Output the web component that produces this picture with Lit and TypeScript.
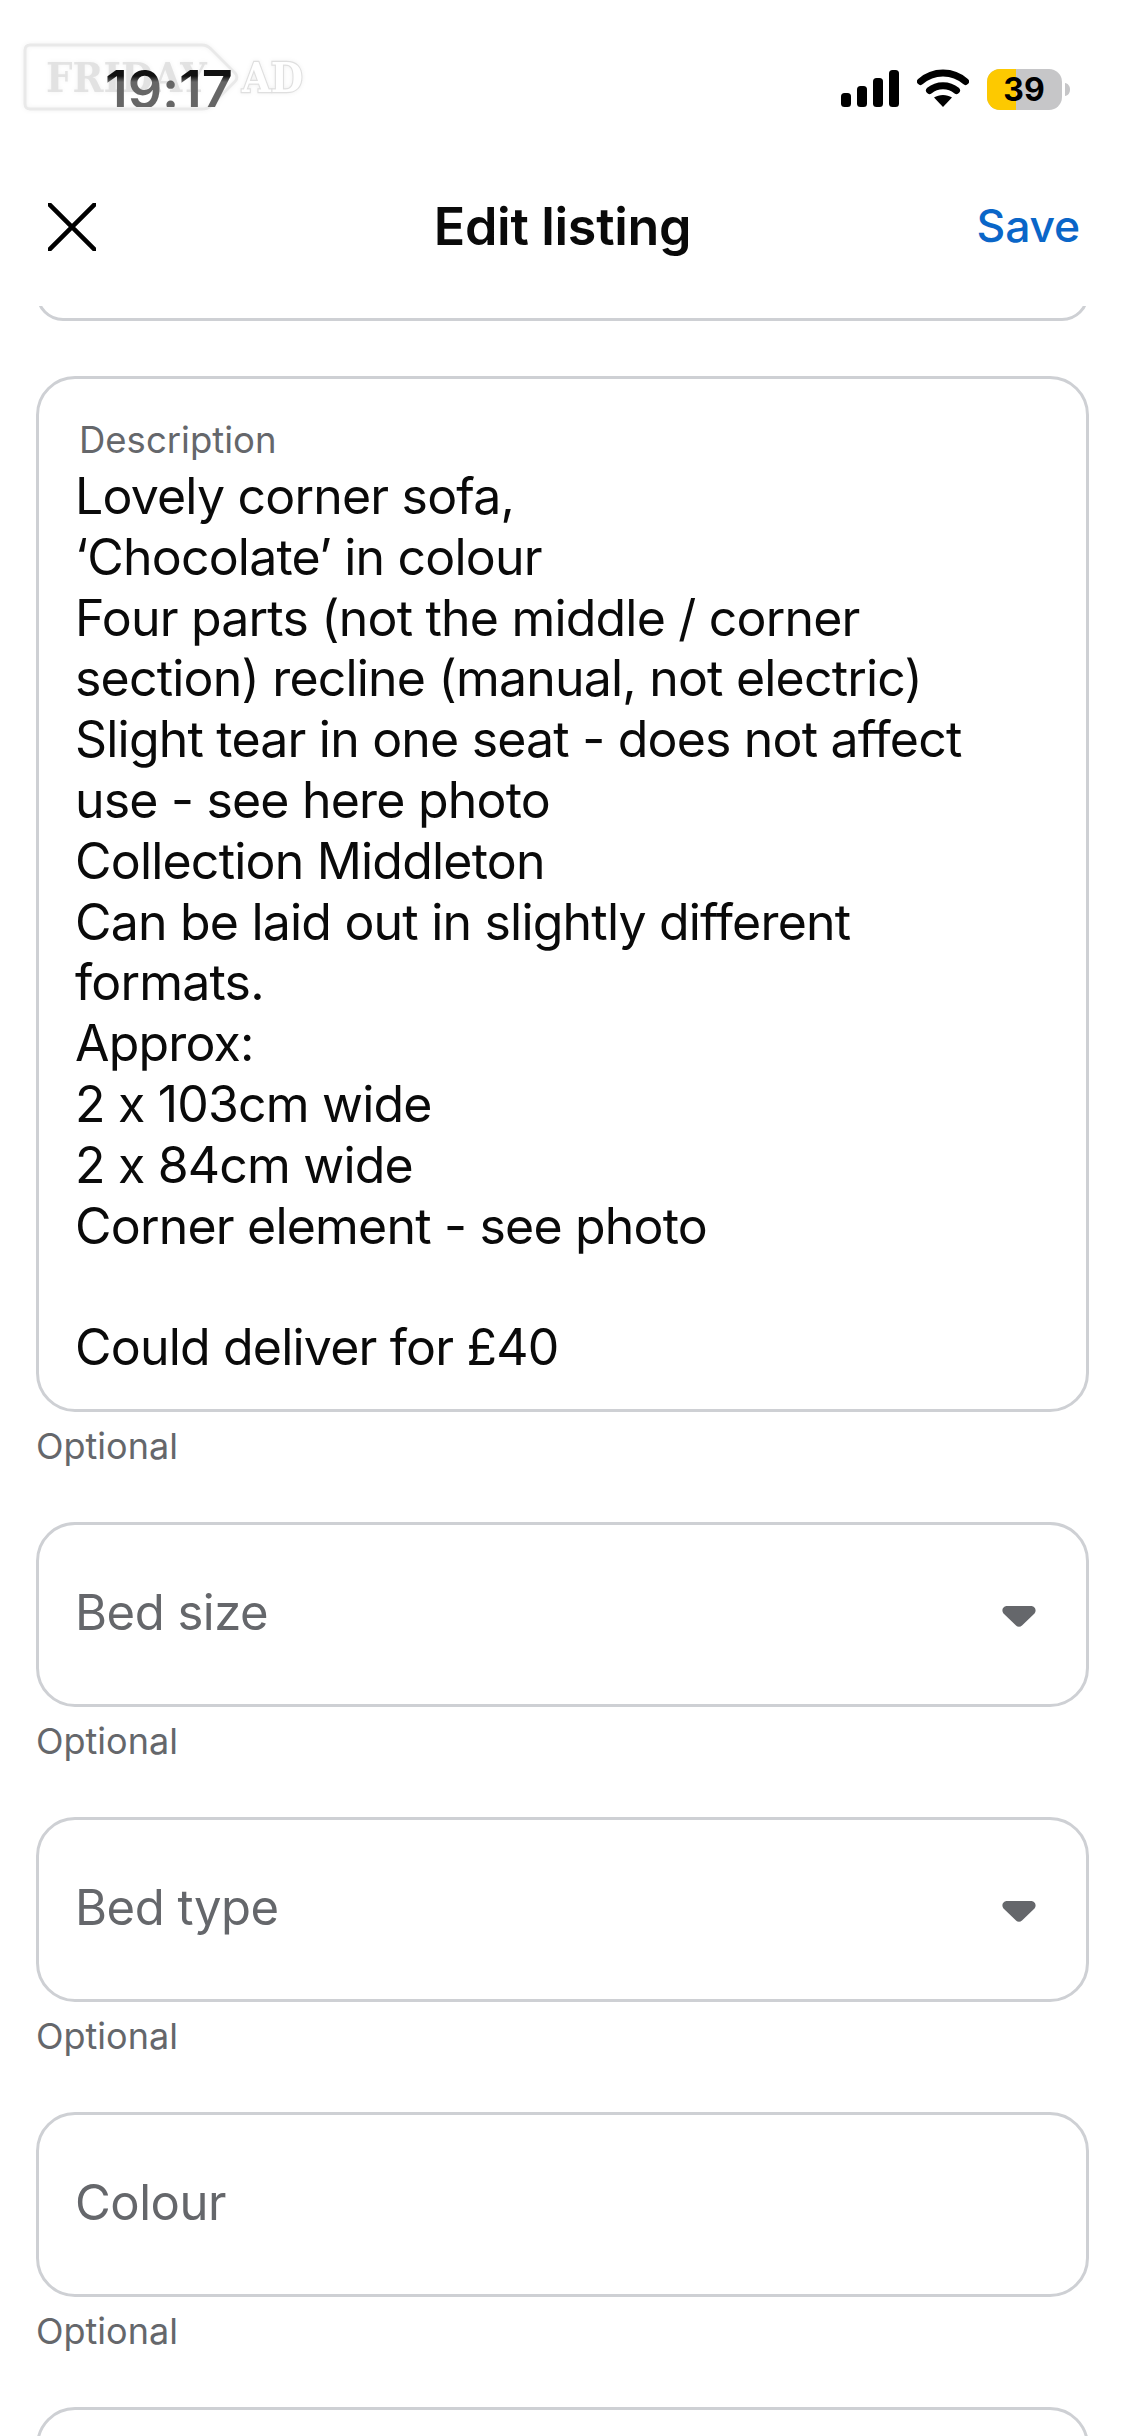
import { LitElement, html, css, svg } from "lit";
import { customElement } from "lit/decorators.js";

const LINES = [
  "Lovely corner sofa,",
  "‘Chocolate’ in colour",
  "Four parts (not the middle / corner",
  "section) recline (manual, not electric)",
  "Slight tear in one seat - does not affect",
  "use - see here photo",
  "Collection Middleton",
  "Can be laid out in slightly different",
  "formats.",
  "Approx:",
  "2 x 103cm wide",
  "2 x 84cm wide",
  "Corner element - see photo",
  "\u00a0",
  "Could deliver for £40",
];

@customElement("app-root")
export class AppRoot extends LitElement {
  static styles = css`
    :host {
      display: block;
      width: 1125px;
      height: 2436px;
      overflow: hidden;
      background: #fff;
      font-family: Inter, "Liberation Sans", sans-serif;
      color: #0a0a0a;
      position: relative;
    }
    .top { height: 306px; display: flex; flex-direction: column; position: relative; z-index: 2; background: #fff; }
    .status { height: 165px; display: flex; justify-content: space-between; position: relative; padding: 63px 54px 0 105px; box-sizing: border-box; }
    .time {
      position: relative; z-index: 1;
      font-size: 54px; font-weight: 600; line-height: 54px; height: 44px; overflow: hidden; letter-spacing: -0.2px;
      background: linear-gradient(180deg, #111 0, #111 13px, #666 19px, #666 100%);
      -webkit-background-clip: text; background-clip: text; color: transparent;
    }
    .indicators { display: flex; align-items: flex-start; gap: 18px; padding-top: 6px; }
    .watermark { position: absolute; left: 22px; top: 42px; filter: drop-shadow(0 0 2px rgba(0,0,0,.06)); }
    .battery { display: block; }
    .nav { height: 120px; display: flex; align-items: center; justify-content: space-between; padding: 0 45px 0 48px; position: relative; margin-top: 1px; }
    .nav svg { display: block; margin-top: 2px; }
    .title { position: absolute; left: 0; right: 0; text-align: center; font-size: 52px; font-weight: 600; letter-spacing: -0.3px; }
    .save { font-size: 44.500px; font-weight: 500; color: #0a66c8; position: relative; letter-spacing: -0.2px; }
    .form { padding: 0 36px; }
    .box { border: 3px solid #ced0d4; border-radius: 39px; box-sizing: border-box; background: #fff; }
    .cut { height: 54px; margin-top: -39px; }
    .desc { margin-top: 55px; height: 1036px; padding: 37px 36px 0; }
    .desc-label { font-size: 36.500px; line-height: 48px; color: #65676b; padding-left: 4px; }
    .desc-text { font-size: 50px; line-height: 60.8px; letter-spacing: -0.8px; margin-top: 2px; }
    .hint { font-size: 36px; line-height: 44px; color: #65676b; margin-top: 12px; }
    .field {
      height: 185px; margin-top: 54px; display: flex; align-items: center; justify-content: space-between;
      padding: 0 50px 0 36px; font-size: 49px; color: #65676b; letter-spacing: -0.5px;
    }
    .field span { margin-top: -4px; }
    .field svg { display: block; margin-top: 4px; }
  `;

  private caret() {
    return html`<svg width="34" height="21" viewBox="0 0 34 21">
      <path d="M5 0h24c4 0 6 4.500 3.500 7.500L20 19.500c-1.700 1.800-4.300 1.800-6 0L1.500 7.500C-1 4.500 1 0 5 0z" fill="#65676b"/>
    </svg>`;
  }

  render() {
    return html`
      <div class="top">
        <div class="status">
          <svg class="watermark" width="290" height="72" viewBox="0 0 290 72">
            <path d="M8 3h172c4 0 6 1 9 4l24 24c2.500 2.500 2.500 6 0 8.500l-25 25c-2 2-4 2.500-8 2.500H8c-3 0-5-2-5-5V8c0-3 2-5 5-5z" fill="none" stroke="#e9e9e9" stroke-width="3"/>
            ${svg`<text x="24" y="50" textLength="161" lengthAdjust="spacingAndGlyphs" fill="#dedede" fill-opacity=".85" style="font-family:'DejaVu Serif',serif;font-weight:700;font-size:41px">FRIDAY</text>
            <text x="220" y="50" textLength="61" lengthAdjust="spacingAndGlyphs" fill="#fff" stroke="#dfdfdf" stroke-width="2.500" paint-order="stroke" style="font-family:'DejaVu Serif',serif;font-weight:700;font-size:41px">AD</text>`}
          </svg>
          <div class="time">19:17</div>
          <div class="indicators">
            <svg width="58" height="38" viewBox="0 0 58 38">
              <rect x="0" y="24" width="10" height="14" rx="3.500" fill="#000"/>
              <rect x="16" y="17" width="10" height="21" rx="3.500" fill="#000"/>
              <rect x="32" y="9" width="10" height="29" rx="3.500" fill="#000"/>
              <rect x="48" y="1" width="10" height="37" rx="3.500" fill="#000"/>
            </svg>
            <svg width="52" height="38" viewBox="0 0 52 38">
              <path d="M3.500 12.500C16 1 36 1 48.500 12.500" fill="none" stroke="#000" stroke-width="7" stroke-linecap="round"/>
              <path d="M12.500 21.500C20 15 32 15 39.500 21.500" fill="none" stroke="#000" stroke-width="7" stroke-linecap="round"/>
              <path d="M26 38l-9-9.500c5-3.500 13-3.500 18 0z" fill="#000"/>
            </svg>
            <svg class="battery" width="84" height="42" viewBox="0 0 84 42">
              <rect x="0" y="0" width="75" height="41" rx="13" fill="#c6c6c8"/>
              <path d="M13 0h16v41H13A13 13 0 0 1 0 28V13A13 13 0 0 1 13 0z" fill="#fdc900"/>
              <path d="M78 14c3 .5 5 3 5 6.500s-2 6-5 6.500z" fill="#c6c6c8"/>
              ${svg`<text x="37" y="32" text-anchor="middle" fill="#000" style="font-family:Inter,sans-serif;font-weight:700;font-size:32px">39</text>`}
            </svg>
          </div>
        </div>
        <div class="nav">
          <svg width="48" height="48" viewBox="0 0 48 48"><path d="M1.500 1.500l45 45M46.500 1.500l-45 45" stroke="#000" stroke-width="4.500" stroke-linecap="round"/></svg>
          <div class="title">Edit listing</div>
          <div class="save">Save</div>
        </div>
      </div>
      <div class="form">
        <div class="box cut"></div>
        <div class="box desc">
          <div class="desc-label">Description</div>
          <div class="desc-text">${LINES.map((l) => html`<div>${l}</div>`)}</div>
        </div>
        <div class="hint">Optional</div>
        <div class="box field"><span>Bed size</span>${this.caret()}</div>
        <div class="hint">Optional</div>
        <div class="box field"><span>Bed type</span>${this.caret()}</div>
        <div class="hint">Optional</div>
        <div class="box field"><span>Colour</span></div>
        <div class="hint">Optional</div>
        <div class="box field"></div>
      </div>
    `;
  }
}
